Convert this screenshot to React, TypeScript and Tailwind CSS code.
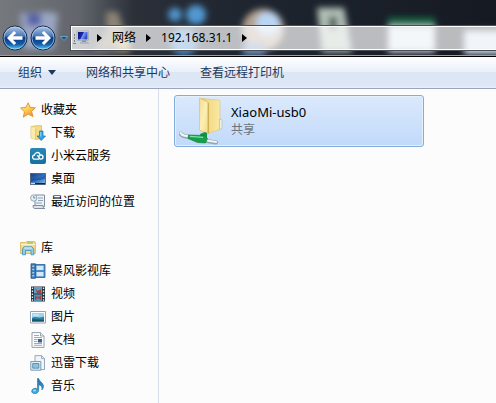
import type { ReactNode } from "react";

function ComputerIcon() {
  return (
    <svg width="18" height="16" viewBox="0 0 18 16" aria-hidden="true">
      <defs>
        <linearGradient id="screen" x1="0" y1="0" x2="1" y2="0.4">
          <stop offset="0" stopColor="#0c1670" />
          <stop offset="0.5" stopColor="#1626b0" />
          <stop offset="0.6" stopColor="#7d9cf0" />
          <stop offset="1" stopColor="#2c48c8" />
        </linearGradient>
      </defs>
      <path d="M1.500 4v9.500" stroke="#777f86" strokeWidth="1" strokeDasharray="2 1" fill="none" />
      <path d="M0 13.500h3" stroke="#777f86" strokeWidth="1" />
      <rect x="4" y="1" width="11.500" height="9.500" rx="0.800" fill="#d5dbe8" stroke="#8d97ab" strokeWidth="0.600" />
      <rect x="5" y="2" width="9.500" height="7.500" fill="url(#screen)" />
      <path d="M9 10.500h4v2H9z" fill="#8b93a3" />
      <path d="M7 13.200l1-1h6l1.500 1z" fill="#eef1f5" stroke="#7a828e" strokeWidth="0.500" />
    </svg>
  );
}

function StarIcon() {
  return (
    <svg width="16" height="16" viewBox="0 0 16 16" aria-hidden="true">
      <defs>
        <linearGradient id="star" x1="0" y1="0" x2="0.6" y2="1">
          <stop offset="0" stopColor="#fff7b8" />
          <stop offset="0.55" stopColor="#fbd04a" />
          <stop offset="1" stopColor="#f0922a" />
        </linearGradient>
      </defs>
      <path d="M8.200 0.800l2 4.600 5.200.4-3.900 3.500 1.500 5.300-4.800-2.500-4.900 3 1.200-5.300L.6 6l5.300-.7z" fill="url(#star)" stroke="#e08b3e" strokeWidth="0.900" strokeLinejoin="round" />
    </svg>
  );
}

function DownloadIcon() {
  return (
    <svg width="16" height="16" viewBox="0 0 16 16" aria-hidden="true">
      <path d="M1 1.500l5-.8h5.500v13L6 14.500 1 13z" fill="#f3dc86" stroke="#d5b556" strokeWidth="0.700" />
      <path d="M1.300 1.700l4.200 1.800v10.700L1.300 13z" fill="#fbecae" />
      <path d="M5.700 3.500v10.500" stroke="#d9b95d" strokeWidth="0.700" />
      <path d="M9.500 6h3.500v5h2.500l-4.200 4.500L7 11h2.500z" fill="#36a1e0" stroke="#1d6fb0" strokeWidth="0.700" />
      <path d="M10.300 7h1v4.500h-1z" fill="#9adcf8" />
    </svg>
  );
}

function CloudIcon() {
  return (
    <svg width="16" height="16" viewBox="0 0 16 16" aria-hidden="true">
      <defs>
        <linearGradient id="cloud" x1="0" y1="0" x2="0" y2="1">
          <stop offset="0" stopColor="#2b88b4" />
          <stop offset="1" stopColor="#1570a0" />
        </linearGradient>
      </defs>
      <rect x="0" y="0" width="16" height="16" rx="2" fill="url(#cloud)" />
      <path d="M8.500 11.200H4.800a2.100 2.100 0 0 1-.3-4.200A2.900 2.900 0 0 1 10 6.200" fill="none" stroke="#fff" strokeWidth="1.300" strokeLinecap="round" />
      <circle cx="10.900" cy="9.100" r="2.100" fill="none" stroke="#fff" strokeWidth="1.300" />
      <path d="M7.300 7.700l1.500 1.500" stroke="#fff" strokeWidth="1.100" strokeLinecap="round" />
    </svg>
  );
}

function DesktopIcon() {
  return (
    <svg width="16" height="16" viewBox="0 0 16 16" aria-hidden="true">
      <defs>
        <linearGradient id="desk" x1="0" y1="0" x2="1" y2="1">
          <stop offset="0" stopColor="#163a7c" />
          <stop offset="0.5" stopColor="#2e6fc0" />
          <stop offset="1" stopColor="#8cc0ee" />
        </linearGradient>
      </defs>
      <rect x="0.500" y="2.500" width="15" height="11" fill="url(#desk)" stroke="#47566e" strokeWidth="0.800" />
      <path d="M1 8.500C5 5.500 9 9.500 15 4v3.500C10 10 6 8 1 11z" fill="#1b4a90" opacity="0.600" />
      <path d="M1 12h14v1.200H1z" fill="#1d2430" />
      <path d="M1 11.800h4v1.400H1z" fill="#c3d9ea" />
    </svg>
  );
}

function RecentIcon() {
  return (
    <svg width="16" height="16" viewBox="0 0 16 16" aria-hidden="true">
      <path d="M5 1h9.500v11.500H5z" fill="#eef2f6" stroke="#7f8d9d" strokeWidth="1" />
      <path d="M3 11.500h10c0 2 .5 3 2 3H5c-1.500 0-2-1-2-3z" fill="#dce4eb" stroke="#7f8d9d" strokeWidth="1" />
      <path d="M8 4h5M8 6.500h5M6 9h6" stroke="#8fa1b3" strokeWidth="1" />
      <circle cx="3.800" cy="4" r="3.200" fill="#e6eef5" stroke="#8fa0b0" strokeWidth="0.900" />
      <path d="M3.800 2v2h1.700" stroke="#4f86b4" strokeWidth="0.900" fill="none" />
    </svg>
  );
}

function LibraryIcon() {
  return (
    <svg width="16" height="16" viewBox="0 0 16 16" aria-hidden="true">
      <path d="M.6 2.500h5l1-1h8l.8 1.500v10.500H.6z" fill="#f6dc7e" stroke="#d4b04c" strokeWidth="0.800" />
      <path d="M1 4.500h14" stroke="#fdf4c8" strokeWidth="1.200" />
      <path d="M7 3h6" stroke="#83b66b" strokeWidth="1" />
      <path d="M2.500 14.800V9L4 6.800h8L13.800 9v5.800H11V10.500H5.500v4.300z" fill="#8ccbee" stroke="#3f8fc4" strokeWidth="0.800" />
      <path d="M4.200 8h7.600" stroke="#dff5ff" strokeWidth="1" />
    </svg>
  );
}

function StormIcon() {
  return (
    <svg width="16" height="16" viewBox="0 0 16 16" aria-hidden="true">
      <path d="M1 .8h4.500v14.500H1z" fill="#3b78b3" stroke="#2a5a8d" strokeWidth="0.800" />
      <path d="M5.500 1.500h9.500v13H5.500z" fill="#4d8cc6" stroke="#2c5f96" strokeWidth="0.800" />
      <path d="M6.500 2.800h7v4.200h-7zM6.500 9h7v4.200h-7z" fill="#d3e8f8" />
      <path d="M2.200 2.500h2v1.500h-2zM2.200 5.700h2v1.500h-2zM2.200 8.900h2v1.500h-2zM2.200 12.100h2v1.500h-2z" fill="#a9cdea" />
    </svg>
  );
}

function VideoIcon() {
  return (
    <svg width="16" height="16" viewBox="0 0 16 16" aria-hidden="true">
      <path d="M1 .5h14v15H1z" fill="#26313a" />
      <path d="M4 1h8v6.500H4z" fill="#5ea3c4" />
      <path d="M4 8.500h8V15H4z" fill="#4f94b8" />
      <path d="M5 2l2.500 3L11 3v4H7zM5 10l3 1 3-1.500V14L8 12l-3 2z" fill="#a83f48" />
      <path d="M1.800 1.500h1.300v1.500H1.800zM1.800 4.500h1.300V6H1.800zM1.800 7.500h1.300V9H1.800zM1.800 10.500h1.300V12H1.800zM1.800 13.300h1.300v1.400H1.800zM12.900 1.500h1.300v1.500h-1.300zM12.900 4.500h1.300V6h-1.300zM12.900 7.500h1.300V9h-1.300zM12.900 10.500h1.300V12h-1.300zM12.900 13.300h1.300v1.400h-1.300z" fill="#e9eef2" />
    </svg>
  );
}

function PictureIcon() {
  return (
    <svg width="16" height="16" viewBox="0 0 16 16" aria-hidden="true">
      <path d="M.5 2.500h15v11.500H.5z" fill="#fff" stroke="#8b98a6" strokeWidth="0.900" />
      <path d="M2 4h12v8.500H2z" fill="#9ed2ee" />
      <path d="M2 9c3-2.500 6 1 12-1.500v5H2z" fill="#2f7f9c" />
      <path d="M2 10.500c4-1 8 1 12 0v2H2z" fill="#17566f" />
      <path d="M3 5.500h6v1H3z" fill="#e4f5fc" />
    </svg>
  );
}

function DocumentIcon() {
  return (
    <svg width="16" height="16" viewBox="0 0 16 16" aria-hidden="true">
      <path d="M2 .6h8.500L14 4v11.400H2z" fill="#fdfdfe" stroke="#8a96a3" strokeWidth="0.900" />
      <path d="M10.500.6V4H14" fill="#dfe7ee" stroke="#8a96a3" strokeWidth="0.800" />
      <path d="M4 3.500h5M4 5.500h8M4 7.500h3.500M4 9.500h3.500M4 11.500h8M4 13.300h8" stroke="#8ba3ba" strokeWidth="0.900" />
      <path d="M8 7h4v3.500H8z" fill="#35618f" />
    </svg>
  );
}

function ThunderIcon() {
  return (
    <svg width="16" height="16" viewBox="0 0 16 16" aria-hidden="true">
      <path d="M5 .6h6.500l3 3v11H5z" fill="#eff5f9" stroke="#8ba0b3" strokeWidth="0.900" />
      <path d="M11.500.6v3h3" fill="none" stroke="#8ba0b3" strokeWidth="0.800" />
      <path d="M.8 6.500h10v8.700H.8z" fill="#e2f0f8" stroke="#7293ad" strokeWidth="0.900" />
      <path d="M2.700 8.500h6.200v4.700H2.700z" fill="#8fc0dc" stroke="#4585ac" strokeWidth="0.800" />
    </svg>
  );
}

function MusicIcon() {
  return (
    <svg width="16" height="16" viewBox="0 0 16 16" aria-hidden="true">
      <defs>
        <linearGradient id="note" x1="0" y1="0" x2="0" y2="1">
          <stop offset="0" stopColor="#1d6fa6" />
          <stop offset="1" stopColor="#41aee0" />
        </linearGradient>
      </defs>
      <path d="M7.500.5h1.200c.4 3.200 4.800 4 4.800 7.700 0 1.700-.8 2.900-1.700 3.800.7-2.800-.5-4.700-3.100-5.300v5.500c0 2-1.700 3.400-3.800 3.400-1.900 0-3.200-.9-3.200-2.400 0-1.700 1.600-2.900 3.700-2.900.8 0 1.500.2 2.100.5z" fill="url(#note)" stroke="#1b6ea4" strokeWidth="0.600" />
      <ellipse cx="4.500" cy="12.500" rx="1.700" ry="1" fill="#9adcf6" />
    </svg>
  );
}

function SharedFolderIcon() {
  return (
    <svg width="48" height="48" viewBox="0 0 48 48" aria-hidden="true">
      <defs>
        <linearGradient id="front" x1="0" y1="0" x2="1" y2="1">
          <stop offset="0" stopColor="#f3dc92" />
          <stop offset="0.5" stopColor="#fcefb4" />
          <stop offset="1" stopColor="#f3d983" />
        </linearGradient>
        <linearGradient id="back" x1="0" y1="0" x2="1" y2="0">
          <stop offset="0" stopColor="#dcb955" />
          <stop offset="0.3" stopColor="#f1d780" />
          <stop offset="1" stopColor="#fae9a4" />
        </linearGradient>
      </defs>
      <path d="M22 1.500l18 1.500 1 1.500v28l-12 4z" fill="url(#back)" stroke="#dcc272" strokeWidth="0.600" />
      <path d="M40.500 22l2.500 1v8.500l-2.500 1z" fill="#eef1e8" stroke="#b8b593" strokeWidth="0.600" />
      <path d="M20.500 1l8.500 4.500V37l-8.500-4z" fill="url(#front)" stroke="#d8bc65" strokeWidth="0.600" />
      <path d="M29.300 6v30" stroke="#b8933c" strokeWidth="0.700" />
      <path d="M1.500 36.500c2 4 9 3 17 4M28 44l9 1.500" stroke="#8fa4ab" strokeWidth="4" strokeLinecap="round" fill="none" />
      <path d="M1.500 36c2 4 9 3 17 4M28 43.500l9 1.500" stroke="#edf4f6" strokeWidth="2.200" strokeLinecap="round" fill="none" />
      <path d="M21 37l5-2 2 1v5h-6z" fill="#16904a" />
      <path d="M9.500 38l16 .5 3 3-2 4.500-8-.5L9 41.500z" fill="#16a04e" stroke="#0d7b39" strokeWidth="0.600" />
      <path d="M11 39.300l13 1" stroke="#75e69b" strokeWidth="1.300" />
    </svg>
  );
}

function OrbButton({ label, flip, id }: { label: string; flip?: boolean; id: string }) {
  return (
    <button type="button" aria-label={label} className="h-[26px] w-[26px] shrink-0">
      <svg width="26" height="26" viewBox="0 0 26 26" aria-hidden="true">
        <defs>
          <linearGradient id={id} x1="0" y1="0" x2="0" y2="1">
            <stop offset="0" stopColor="#b4c8e4" />
            <stop offset="0.4" stopColor="#4a7cba" />
            <stop offset="0.5" stopColor="#0c3a80" />
            <stop offset="0.75" stopColor="#1359a8" />
            <stop offset="1" stopColor="#58d4fa" />
          </linearGradient>
        </defs>
        <circle cx="13" cy="13" r="12" fill={`url(#${id})`} stroke="#142a4a" strokeWidth="1" />
        <circle cx="13" cy="13" r="11" fill="none" stroke="#c6def2" strokeWidth="0.900" opacity="0.700" />
        <path
          d="M5 13l7-7 2.200 2-3.300 3.300h9.600v3.400h-9.600L14.200 18 12 20z"
          fill="#fff"
          transform={flip ? "translate(26 0) scale(-1 1)" : undefined}
        />
      </svg>
    </button>
  );
}

// blurred desktop seen through the glass frame
function GlassBackdrop() {
  return (
    <svg className="absolute inset-0 h-full w-full" viewBox="0 0 496 57" preserveAspectRatio="none" aria-hidden="true">
      <defs>
        <linearGradient id="glass" x1="0" y1="0" x2="1" y2="0">
          <stop offset="0" stopColor="#75797e" />
          <stop offset="0.16" stopColor="#62666c" />
          <stop offset="0.27" stopColor="#2b3039" />
          <stop offset="0.45" stopColor="#202731" />
          <stop offset="1" stopColor="#151922" />
        </linearGradient>
        <filter id="haze" x="-50%" y="-50%" width="200%" height="200%">
          <feGaussianBlur stdDeviation="3" />
        </filter>
      </defs>
      <rect width="496" height="57" fill="url(#glass)" />
      <g filter="url(#haze)">
        <path d="M20 14l28-2 10 2-4 36H24z" fill="#9aa5c2" />
        <path d="M27 14h14v12H27z" fill="#5560a8" />
        <path d="M106 12h12l12 40H92l14-20z" fill="#8c8374" />
        <path d="M118 38h12v14h-12z" fill="#c5a85a" />
        <circle cx="175" cy="15" r="7" fill="#4f94cb" />
        <circle cx="196" cy="15" r="10" fill="#5198d2" />
        <circle cx="184" cy="42" r="14" fill="#4385c4" />
        <circle cx="263" cy="30" r="21" fill="#b4a08e" />
        <circle cx="268" cy="24" r="12" fill="#b9d5f3" />
        <path d="M243 44h22v12h-22z" fill="#6a8fba" />
        <path d="M317 8h27l8 45h-30z" fill="#b0bfb6" />
        <path d="M329 17h8v14h-8z" fill="#4b5a58" />
        <path d="M388 21h47v32h-47z" fill="#d9e3ee" />
        <path d="M388 18h47v9h-47z" fill="#1c6e48" />
        <path d="M464 31h40v24h-40z" fill="#cfdeee" />
      </g>
    </svg>
  );
}

function Chevron() {
  return (
    <svg width="5" height="8" viewBox="0 0 5 8" className="shrink-0" aria-hidden="true">
      <path d="M0 0l5 4-5 4z" fill="#000" />
    </svg>
  );
}

type Item = { label: string; icon: ReactNode };

const favorites: Item[] = [
  { label: "下载", icon: <DownloadIcon /> },
  { label: "小米云服务", icon: <CloudIcon /> },
  { label: "桌面", icon: <DesktopIcon /> },
  { label: "最近访问的位置", icon: <RecentIcon /> },
];

const libraries: Item[] = [
  { label: "暴风影视库", icon: <StormIcon /> },
  { label: "视频", icon: <VideoIcon /> },
  { label: "图片", icon: <PictureIcon /> },
  { label: "文档", icon: <DocumentIcon /> },
  { label: "迅雷下载", icon: <ThunderIcon /> },
  { label: "音乐", icon: <MusicIcon /> },
];

function TreeGroup({ title, icon, items }: { title: string; icon: ReactNode; items: Item[] }) {
  return (
    <section>
      <button type="button" className="flex h-[23px] w-full items-center gap-[5px] pl-5">
        {icon}
        {title}
      </button>
      <ul>
        {items.map((item) => (
          <li key={item.label}>
            <button type="button" className="flex h-[23px] w-full items-center gap-[5px] pl-[30px] whitespace-nowrap">
              {item.icon}
              {item.label}
            </button>
          </li>
        ))}
      </ul>
    </section>
  );
}

export default function App() {
  return (
    <div className="flex min-h-screen flex-col bg-[#fcfcfd] font-['Noto_Sans','Noto_Sans_CJK_SC',sans-serif] text-[12px] leading-4 text-black">
      <header className="relative h-[57px] overflow-hidden border-b border-black">
        <GlassBackdrop />
        <div className="relative flex h-full items-end border-b border-[#9a9fa6] pb-[4px] pl-[2px]">
          <div className="flex h-[26px] items-center gap-[2px]">
            <OrbButton label="后退" id="orb-back" />
            <OrbButton label="前进" id="orb-forward" flip />
            <button type="button" aria-label="最近的页面" className="ml-[2px] w-[8px]">
              <svg width="8" height="5" viewBox="0 0 8 5" aria-hidden="true">
                <path d="M.5.500h7L4 4.500z" fill="#1d4f7c" stroke="#6fb0d6" strokeWidth="0.800" />
              </svg>
            </button>
          </div>
          <nav className="ml-[2px] flex h-[26px] flex-1 items-center border border-r-0 border-[#4a4e55] bg-white/70 pl-[2px] shadow-[inset_1px_1px_0_#fff,inset_0_-1px_0_#fff]">
            <ComputerIcon />
            <span className="ml-[6px] flex items-center gap-[10px]">
              <Chevron />
              <button type="button">网络</button>
              <Chevron />
              <button type="button">192.168.31.1</button>
              <Chevron />
            </span>
          </nav>
        </div>
      </header>

      <div className="flex h-8 items-center border-b border-[#98a6be] bg-[linear-gradient(#ffffff_0%,#e9f0f9_48%,#dce6f4_50%,#dde7f5_92%,#e9f0f9_100%)] pl-[18px] text-[#1e395b]">
        <button type="button" className="flex items-center gap-[6px]">
          组织
          <svg width="8" height="5" viewBox="0 0 8 5" aria-hidden="true">
            <path d="M0 0h8L4 5z" fill="#1e395b" />
          </svg>
        </button>
        <button type="button" className="ml-[30px]">网络和共享中心</button>
        <button type="button" className="ml-[30px]">查看远程打印机</button>
      </div>

      <div className="flex flex-1">
        <aside className="w-[159px] shrink-0 space-y-[23px] border-r border-[#d6dfea] pt-[9px]">
          <TreeGroup title="收藏夹" icon={<StarIcon />} items={favorites} />
          <TreeGroup title="库" icon={<LibraryIcon />} items={libraries} />
        </aside>
        <main className="flex-1 pt-[6px] pl-[15px]">
          <button
            type="button"
            className="flex h-[52px] w-[250px] items-center gap-[4px] rounded-[3px] border border-[#84acdd] bg-linear-to-b from-[#dbe9fc] to-[#c1dafa] pl-[4px] text-left shadow-[inset_0_0_0_1px_#e6f0fd]"
          >
            <SharedFolderIcon />
            <span className="flex flex-col gap-[2px]">
              <span className="text-[13px] leading-4">XiaoMi-usb0</span>
              <span className="leading-4 text-[#6d7480]">共享</span>
            </span>
          </button>
        </main>
      </div>
    </div>
  );
}
